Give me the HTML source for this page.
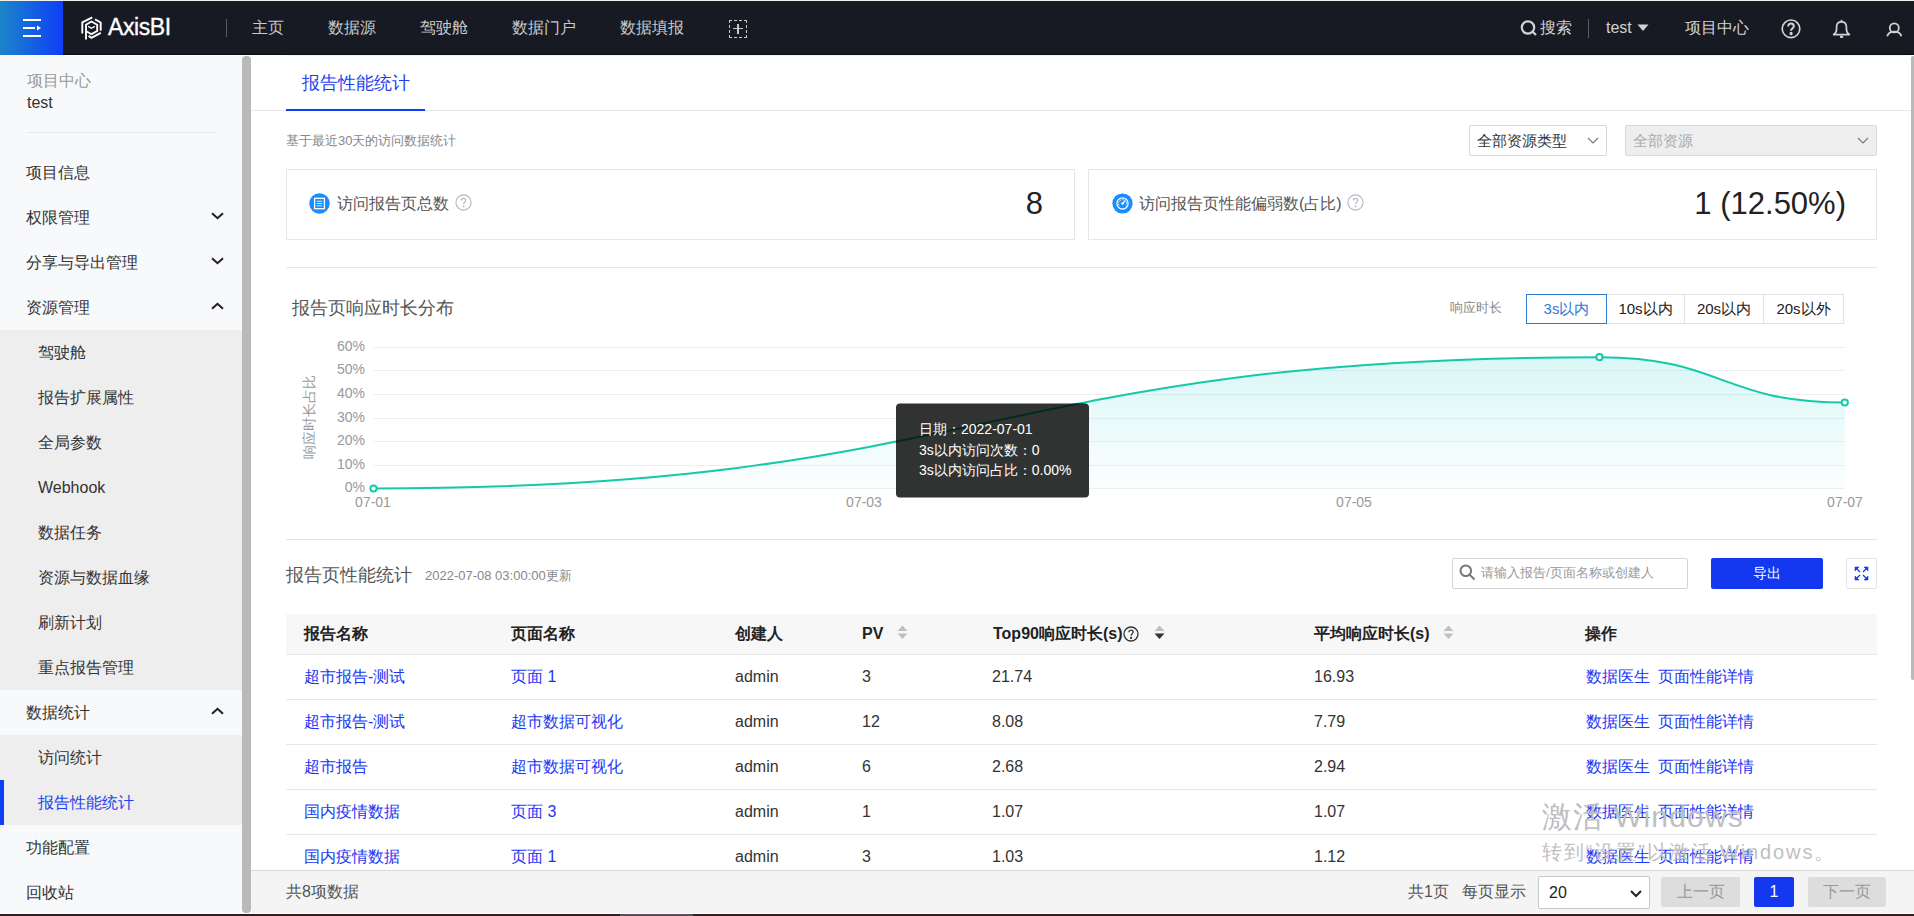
<!DOCTYPE html>
<html><head><meta charset="utf-8"><title>AxisBI</title>
<style>
*{box-sizing:border-box;margin:0;padding:0}
html,body{width:1914px;height:916px;overflow:hidden;background:#fff;font-family:"Liberation Sans",sans-serif;color:#333}
.a{position:absolute;white-space:nowrap}
#topline{left:0;top:0;width:1914px;height:1px;background:#f0f0ec}
#hdr{left:0;top:1px;width:1914px;height:54px;background:#171a22}
#menubtn{left:0;top:0;width:63px;height:54px;background:linear-gradient(90deg,#1b86c8,#0f3ef8)}
.navt{top:0;height:54px;line-height:54px;font-size:16px;color:#c8c9cc}
#side{left:0;top:55px;width:242px;height:858px;background:#f8f9fb;overflow:hidden}
.si{position:absolute;left:0;width:242px;height:45px;line-height:45px;font-size:16px;color:#333;padding-left:26px}
.sub{background:#eeeeee;padding-left:38px}
.chev{position:absolute;right:18px;top:17px}
#sbar{left:242px;top:56px;width:9px;height:857px;background:#b9b9b9;border-radius:4px}
#rbar{left:1911px;top:56px;width:4px;height:624px;background:#b9b9b9;border-radius:3px}
#bot{left:0;top:913px;width:1914px;height:1px;background:#fff}
#bot2{left:0;top:914px;width:1914px;height:2px;background:#321c22}

.gray13{font-size:13px;color:#888}
.card{border:1px solid #e6e6e6;background:#fff}
.sel{border:1px solid #d9d9d9;border-radius:2px;background:#fff;font-size:15px;line-height:29px;padding-left:7px;color:#333}
.btn{position:absolute;top:0;height:30px;line-height:28px;text-align:center;font-size:15px;color:#222;border:1px solid #e3e3e3;background:#fff}
.th{position:absolute;top:0;height:40px;line-height:39px;font-size:16px;font-weight:bold;color:#222}
.td{position:absolute;height:45px;line-height:44px;font-size:16px;color:#333}
.lk{color:#1a36f6}
.rowline{position:absolute;left:0;width:1591px;height:1px;background:#e6e6e6}
</style></head><body>
<div class="a" id="topline"></div>
<div class="a" id="hdr">
  <div class="a" id="menubtn">
    <svg class="a" style="left:22px;top:17px" width="20" height="20" viewBox="0 0 20 20">
      <rect x="1" y="1" width="18" height="2" fill="#fff"/>
      <rect x="1" y="9" width="12" height="2" fill="#fff"/>
      <path d="M15 7.5 L19 10 L15 12.5 Z" fill="#fff"/>
      <rect x="1" y="17" width="18" height="2" fill="#fff"/>
    </svg>
  </div>
  <svg class="a" style="left:78px;top:13px" width="26" height="28" viewBox="0 0 26 28" fill="none" stroke="#fff" stroke-width="1.9" stroke-linejoin="miter">
    <path d="M14.3 3.3 L4.3 8.3 L4.3 19.6"/>
    <path d="M17 5.4 L22.7 8.5 L22.7 16.8"/>
    <path d="M8 25.6 L8 10.7 L13.4 7.5 L19.2 10.7 L19.2 17 L13.4 20.2 L8 17"/>
    <path d="M10.2 12.4 L13.4 14.3 L16.8 12.4" stroke-width="1.3"/>
    <path d="M10.6 21.9 L13.4 23.8 L22.8 18.9"/>
  </svg>
  <div class="a" style="left:108px;top:-1px;height:54px;line-height:54px;font-size:23px;color:#fff;letter-spacing:-0.4px;-webkit-text-stroke:0.35px #fff">AxisBI</div>
  <div class="a" style="left:226px;top:18px;width:1px;height:18px;background:#5a5d66"></div>
  <div class="a navt" style="left:252px">主页</div>
  <div class="a navt" style="left:328px">数据源</div>
  <div class="a navt" style="left:420px">驾驶舱</div>
  <div class="a navt" style="left:512px">数据门户</div>
  <div class="a navt" style="left:620px">数据填报</div>
  <div class="a" style="left:729px;top:19px;width:18px;height:18px;border:1px dashed #c8c9cc"></div>
  <div class="a" style="left:733px;top:27px;width:10px;height:1.3px;background:#c8c9cc"></div>
  <div class="a" style="left:737.4px;top:23px;width:1.3px;height:10px;background:#c8c9cc"></div>
  <svg class="a" style="left:1520px;top:18px" width="18" height="18" viewBox="0 0 18 18" fill="none" stroke="#d2d2d2" stroke-width="2.2"><circle cx="8" cy="8.5" r="6.2"/><path d="M12.5 12.5 L16 16"/></svg>
  <div class="a navt" style="left:1540px;color:#d2d2d2">搜索</div>
  <div class="a" style="left:1588px;top:18px;width:1px;height:19px;background:#5a5d66"></div>
  <div class="a navt" style="left:1606px;color:#d2d2d2;font-size:16px">test</div>
  <svg class="a" style="left:1637px;top:23px" width="12" height="8" viewBox="0 0 12 8"><path d="M0.5 0.5 L11.5 0.5 L6 7 Z" fill="#d2d2d2"/></svg>
  <div class="a navt" style="left:1685px;color:#d2d2d2">项目中心</div>
  <svg class="a" style="left:1780px;top:17px" width="21" height="21" viewBox="0 0 21 21" fill="none" stroke="#d2d2d2" stroke-width="1.7"><circle cx="11" cy="10.8" r="8.8"/><path d="M8.2 8.5 C8.2 6.6 9.5 5.6 11 5.6 C12.6 5.6 13.8 6.6 13.8 8.2 C13.8 10.2 11.1 10.4 11.1 12.7" stroke-width="2"/><circle cx="11.1" cy="15.5" r="0.8" fill="#d2d2d2"/></svg>
  <svg class="a" style="left:1832px;top:16px" width="20" height="22" viewBox="0 0 20 22" fill="none" stroke="#d2d2d2" stroke-width="1.7" stroke-linejoin="round"><g transform="translate(0,-0.8)"><path d="M1.6 18.4 C3.4 17.4 4.6 15.6 4.6 12.8 L4.6 10.5 C4.6 7.6 6.6 5.6 9.5 5.6 C12.4 5.6 14.4 7.6 14.4 10.5 L14.4 12.8 C14.4 15.6 15.6 17.4 17.4 18.4 Z"/><path d="M8 20.6 L11.2 20.6" stroke-width="2.2"/><path d="M9.5 3.6 L9.5 5.6"/></g></svg>
  <svg class="a" style="left:1885px;top:18px" width="18" height="20" viewBox="0 0 18 20" fill="none" stroke="#d2d2d2" stroke-width="1.8"><circle cx="9.3" cy="8.9" r="4.5"/><path d="M2.2 17.2 C3 14.4 5.8 12.6 9.3 12.6 C12.8 12.6 15.6 14.4 16.4 17.2"/></svg>
</div>
<div class="a" id="side">
<div class="a" style="left:27px;top:16px;font-size:16px;color:#999;line-height:20px">项目中心</div>
<div class="a" style="left:27px;top:38px;font-size:16px;color:#333;line-height:20px">test</div>
<div class="a" style="left:27px;top:77px;width:188px;height:1px;background:#e6e8ec"></div>
<div class="si " style="top:95px">项目信息</div>
<div class="si " style="top:140px">权限管理<svg class="chev" width="13" height="8" viewBox="0 0 13 8" fill="none" stroke="#222" stroke-width="2.1"><path d="M1 1.2 L6.5 6.2 L12 1.2"/></svg></div>
<div class="si " style="top:185px">分享与导出管理<svg class="chev" width="13" height="8" viewBox="0 0 13 8" fill="none" stroke="#222" stroke-width="2.1"><path d="M1 1.2 L6.5 6.2 L12 1.2"/></svg></div>
<div class="si " style="top:230px">资源管理<svg class="chev" width="13" height="8" viewBox="0 0 13 8" fill="none" stroke="#222" stroke-width="2.1"><path d="M1 6.8 L6.5 1.8 L12 6.8"/></svg></div>
<div class="si sub" style="top:275px">驾驶舱</div>
<div class="si sub" style="top:320px">报告扩展属性</div>
<div class="si sub" style="top:365px">全局参数</div>
<div class="si sub" style="top:410px">Webhook</div>
<div class="si sub" style="top:455px">数据任务</div>
<div class="si sub" style="top:500px">资源与数据血缘</div>
<div class="si sub" style="top:545px">刷新计划</div>
<div class="si sub" style="top:590px">重点报告管理</div>
<div class="si " style="top:635px">数据统计<svg class="chev" width="13" height="8" viewBox="0 0 13 8" fill="none" stroke="#222" stroke-width="2.1"><path d="M1 6.8 L6.5 1.8 L12 6.8"/></svg></div>
<div class="si sub" style="top:680px">访问统计</div>
<div class="si sub act" style="top:725px;color:#1f3ff0">报告性能统计</div>
<div class="si " style="top:770px">功能配置</div>
<div class="si " style="top:815px">回收站</div>
<div class="a" style="left:0;top:725px;width:4px;height:45px;background:#0f3ef8"></div>
</div>

<div class="a" id="main" style="left:251px;top:55px;width:1660px;height:858px;overflow:hidden">
  <!-- tab -->
  <div class="a" style="left:0;top:55px;width:1660px;height:1px;background:#e8e8e8"></div>
  <div class="a" style="left:51px;top:17px;font-size:18px;line-height:22px;color:#1f3ff0">报告性能统计</div>
  <div class="a" style="left:35px;top:54px;width:139px;height:2px;background:#0f3ef8"></div>
  <div class="a gray13" style="left:35px;top:77px;line-height:18px">基于最近30天的访问数据统计</div>
  <div class="a sel" style="left:1218px;top:70px;width:138px;height:31px">全部资源类型
    <svg class="a" style="left:117px;top:11px" width="12" height="8" viewBox="0 0 12 8" fill="none" stroke="#777" stroke-width="1.1"><path d="M1 1 L6 6 L11 1"/></svg></div>
  <div class="a sel" style="left:1374px;top:70px;width:252px;height:31px;background:#eeeeee;color:#aaa">全部资源
    <svg class="a" style="left:231px;top:11px" width="12" height="8" viewBox="0 0 12 8" fill="none" stroke="#777" stroke-width="1.1"><path d="M1 1 L6 6 L11 1"/></svg></div>
  <!-- cards -->
  <div class="a card" style="left:35px;top:114px;width:789px;height:71px">
    <svg class="a" style="left:22px;top:23px" width="21" height="21" viewBox="0 0 21 21"><circle cx="10.5" cy="10.5" r="10.2" fill="#1a8cff"/><rect x="5.6" y="5.3" width="9.8" height="10.4" fill="none" stroke="#fff" stroke-width="1.3"/><path d="M7.8 8.3 H13.2 M7.8 10.5 H13.2 M7.8 12.7 H13.2" stroke="#fff" stroke-width="1.1" opacity="0.85"/></svg>
    <div class="a" style="left:50px;top:23px;font-size:16px;line-height:22px;color:#555">访问报告页总数</div>
    <svg class="a" style="left:168px;top:24px" width="17" height="17" viewBox="0 0 17 17" fill="none" stroke="#b5b5c3" stroke-width="1.1"><circle cx="8.5" cy="8.5" r="7.6"/><path d="M6.3 6.6 C6.3 5.2 7.3 4.4 8.5 4.4 C9.7 4.4 10.7 5.2 10.7 6.4 C10.7 8 8.6 8.2 8.6 10.2"/><circle cx="8.6" cy="12.4" r="0.4" fill="#b5b5c3"/></svg>
    <div class="a" style="right:31px;top:15px;font-size:31px;line-height:38px;color:#222">8</div>
  </div>
  <div class="a card" style="left:837px;top:114px;width:789px;height:71px">
    <svg class="a" style="left:23px;top:23px" width="21" height="21" viewBox="0 0 21 21"><circle cx="10.5" cy="10.5" r="10.1" fill="#1a8cff"/><circle cx="10.5" cy="10.5" r="5.6" fill="none" stroke="#fff" stroke-width="1.2"/><path d="M7 12.6 A4 4 0 1 1 14 12.6" fill="none" stroke="#fff" stroke-width="1" stroke-dasharray="1.6 1"/><path d="M10.5 10.5 L13.2 7.6" stroke="#fff" stroke-width="1.2"/><circle cx="10.5" cy="10.5" r="1.2" fill="#fff"/></svg>
    <div class="a" style="left:50px;top:23px;font-size:16px;line-height:22px;color:#555">访问报告页性能偏弱数(占比)</div>
    <svg class="a" style="left:258px;top:24px" width="17" height="17" viewBox="0 0 17 17" fill="none" stroke="#b5b5c3" stroke-width="1.1"><circle cx="8.5" cy="8.5" r="7.6"/><path d="M6.3 6.6 C6.3 5.2 7.3 4.4 8.5 4.4 C9.7 4.4 10.7 5.2 10.7 6.4 C10.7 8 8.6 8.2 8.6 10.2"/><circle cx="8.6" cy="12.4" r="0.4" fill="#b5b5c3"/></svg>
    <div class="a" style="right:30px;top:15px;font-size:31px;line-height:38px;color:#222">1 (12.50%)</div>
  </div>
  <div class="a" style="left:35px;top:212px;width:1591px;height:1px;background:#e6e6e6"></div>
  <!-- chart -->
  <div class="a" style="left:41px;top:242px;font-size:18px;line-height:22px;color:#555">报告页响应时长分布</div>
  <div class="a gray13" style="left:1199px;top:244px;line-height:18px">响应时长</div>
  <div class="a" style="left:1275px;top:239px;width:318px;height:30px">
    <div class="btn" style="left:0;width:81px;border-color:#2a7ad8;color:#2a7ad8;z-index:2">3s以内</div>
    <div class="btn" style="left:80px;width:79px">10s以内</div>
    <div class="btn" style="left:158px;width:80px">20s以内</div>
    <div class="btn" style="left:237px;width:81px">20s以外</div>
  </div>

  <!-- table section -->
  <div class="a" style="left:35px;top:484px;width:1591px;height:1px;background:#e2e2e2"></div>
  <div class="a" style="left:35px;top:509px;font-size:18px;line-height:22px;color:#555">报告页性能统计</div>
  <div class="a gray13" style="left:174px;top:512px;line-height:18px">2022-07-08 03:00:00更新</div>
  <div class="a" style="left:1201px;top:503px;width:236px;height:31px;border:1px solid #d4d4d4;border-radius:2px;background:#fff">
    <svg class="a" style="left:6px;top:5px" width="17" height="17" viewBox="0 0 17 17" fill="none" stroke="#777" stroke-width="2"><circle cx="6.8" cy="6.8" r="5.3"/><path d="M10.6 10.6 L15.5 15.5"/></svg>
    <div class="a" style="left:28px;top:5px;font-size:13px;line-height:18px;color:#999">请输入报告/页面名称或创建人</div>
  </div>
  <div class="a" style="left:1460px;top:503px;width:112px;height:31px;background:#1438f0;border-radius:2px;color:#fff;font-size:14px;line-height:31px;text-align:center">导出</div>
  <div class="a" style="left:1595px;top:503px;width:31px;height:31px;border:1px solid #e3e3e8;border-radius:2px;background:#fff">
    <svg class="a" style="left:7px;top:7px" width="15" height="15" viewBox="0 0 15 15" fill="#1a36f6" stroke="#1a36f6" stroke-width="1.2">
      <path d="M1 1 L5 1 L1 5 Z" stroke-width="0.6"/><path d="M2 2 L6 6"/>
      <path d="M14 1 L10 1 L14 5 Z" stroke-width="0.6"/><path d="M13 2 L9 6"/>
      <path d="M1 14 L5 14 L1 10 Z" stroke-width="0.6"/><path d="M2 13 L6 9"/>
      <path d="M14 14 L10 14 L14 10 Z" stroke-width="0.6"/><path d="M13 13 L9 9"/>
    </svg>
  </div>
  <div class="a" style="left:35px;top:559px;width:1591px;height:41px;background:#f7f7f7;border-bottom:1px solid #e6e6e6">
    <div class="th" style="left:18px">报告名称</div>
    <div class="th" style="left:225px">页面名称</div>
    <div class="th" style="left:449px">创建人</div>
    <div class="th" style="left:576px">PV</div>
    <svg class="a" style="left:611px;top:11px" width="11" height="15" viewBox="0 0 11 15"><path d="M0.5 6 L5.5 0.5 L10.5 6 Z" fill="#c0c0c0"/><path d="M0.5 8.5 L5.5 14 L10.5 8.5 Z" fill="#c0c0c0"/></svg>
    <div class="th" style="left:707px">Top90响应时长(s)</div>
    <svg class="a" style="left:837px;top:12px" width="16" height="16" viewBox="0 0 16 16" fill="none" stroke="#333" stroke-width="1.3"><circle cx="8" cy="8" r="7"/><path d="M5.9 6.2 C5.9 4.9 6.8 4.1 8 4.1 C9.2 4.1 10.1 4.9 10.1 6 C10.1 7.6 8.1 7.8 8.1 9.8"/><circle cx="8.1" cy="11.9" r="0.5" fill="#333"/></svg>
    <svg class="a" style="left:868px;top:11px" width="11" height="15" viewBox="0 0 11 15"><path d="M0.5 6 L5.5 0.5 L10.5 6 Z" fill="#c0c0c0"/><path d="M0.5 8.5 L5.5 14 L10.5 8.5 Z" fill="#333"/></svg>
    <div class="th" style="left:1028px">平均响应时长(s)</div>
    <svg class="a" style="left:1157px;top:11px" width="11" height="15" viewBox="0 0 11 15"><path d="M0.5 6 L5.5 0.5 L10.5 6 Z" fill="#c0c0c0"/><path d="M0.5 8.5 L5.5 14 L10.5 8.5 Z" fill="#c0c0c0"/></svg>
    <div class="th" style="left:1299px">操作</div>
  </div>
  <div class="a" style="left:35px;top:600px;width:1591px;height:45px;border-bottom:1px solid #e6e6e6">
    <div class="td lk" style="left:18px">超市报告-测试</div><div class="td lk" style="left:225px">页面 1</div><div class="td" style="left:449px">admin</div><div class="td" style="left:576px">3</div><div class="td" style="left:706px">21.74</div><div class="td" style="left:1028px">16.93</div><div class="td lk" style="left:1300px">数据医生</div><div class="td lk" style="left:1372px">页面性能详情</div>
  </div>
  <div class="a" style="left:35px;top:645px;width:1591px;height:45px;border-bottom:1px solid #e6e6e6">
    <div class="td lk" style="left:18px">超市报告-测试</div><div class="td lk" style="left:225px">超市数据可视化</div><div class="td" style="left:449px">admin</div><div class="td" style="left:576px">12</div><div class="td" style="left:706px">8.08</div><div class="td" style="left:1028px">7.79</div><div class="td lk" style="left:1300px">数据医生</div><div class="td lk" style="left:1372px">页面性能详情</div>
  </div>
  <div class="a" style="left:35px;top:690px;width:1591px;height:45px;border-bottom:1px solid #e6e6e6">
    <div class="td lk" style="left:18px">超市报告</div><div class="td lk" style="left:225px">超市数据可视化</div><div class="td" style="left:449px">admin</div><div class="td" style="left:576px">6</div><div class="td" style="left:706px">2.68</div><div class="td" style="left:1028px">2.94</div><div class="td lk" style="left:1300px">数据医生</div><div class="td lk" style="left:1372px">页面性能详情</div>
  </div>
  <div class="a" style="left:35px;top:735px;width:1591px;height:45px;border-bottom:1px solid #e6e6e6">
    <div class="td lk" style="left:18px">国内疫情数据</div><div class="td lk" style="left:225px">页面 3</div><div class="td" style="left:449px">admin</div><div class="td" style="left:576px">1</div><div class="td" style="left:706px">1.07</div><div class="td" style="left:1028px">1.07</div><div class="td lk" style="left:1300px">数据医生</div><div class="td lk" style="left:1372px">页面性能详情</div>
  </div>
  <div class="a" style="left:35px;top:780px;width:1591px;height:45px;border-bottom:1px solid #e6e6e6">
    <div class="td lk" style="left:18px">国内疫情数据</div><div class="td lk" style="left:225px">页面 1</div><div class="td" style="left:449px">admin</div><div class="td" style="left:576px">3</div><div class="td" style="left:706px">1.03</div><div class="td" style="left:1028px">1.12</div><div class="td lk" style="left:1300px">数据医生</div><div class="td lk" style="left:1372px">页面性能详情</div>
  </div>
</div>
<svg class="a" style="left:280px;top:330px" width="1600" height="190" viewBox="280 330 1600 190" font-family="Liberation Sans, sans-serif" font-size="14" fill="#999">
  <defs>
    <linearGradient id="ag" x1="0" y1="0" x2="0" y2="1"><stop offset="0" stop-color="#52dad6" stop-opacity="0.22"/><stop offset="1" stop-color="#52dad6" stop-opacity="0.02"/></linearGradient>
    <clipPath id="tc"><rect x="896" y="403.5" width="193" height="94" rx="4"/></clipPath>
  </defs>
  <path d="M373 347.5 H1845" stroke="#eeeff3" stroke-width="1"/><text x="365" y="351.0" text-anchor="end">60%</text><path d="M373 370.5 H1845" stroke="#eeeff3" stroke-width="1"/><text x="365" y="374.0" text-anchor="end">50%</text><path d="M373 394.5 H1845" stroke="#eeeff3" stroke-width="1"/><text x="365" y="398.0" text-anchor="end">40%</text><path d="M373 418.5 H1845" stroke="#eeeff3" stroke-width="1"/><text x="365" y="422.0" text-anchor="end">30%</text><path d="M373 441.5 H1845" stroke="#eeeff3" stroke-width="1"/><text x="365" y="445.0" text-anchor="end">20%</text><path d="M373 465.5 H1845" stroke="#eeeff3" stroke-width="1"/><text x="365" y="469.0" text-anchor="end">10%</text><path d="M373 488.5 H1845" stroke="#eeeff3" stroke-width="1"/><text x="365" y="492.0" text-anchor="end">0%</text>
  <text transform="translate(314,417) rotate(-90)" text-anchor="middle" font-size="13.5">响应时长占比</text>
  <text x="373" y="507" text-anchor="middle">07-01</text><text x="864" y="507" text-anchor="middle">07-03</text><text x="1354" y="507" text-anchor="middle">07-05</text><text x="1845" y="507" text-anchor="middle">07-07</text>
  <path d="M373,488.5 C986.25,488.5 986.25,357.2 1599.5,357.2 C1722,357.2 1722,402.5 1844.8,402.5 L1844.8,488.5 L373,488.5 Z" fill="url(#ag)"/>
  <path d="M373,488.5 C986.25,488.5 986.25,357.2 1599.5,357.2 C1722,357.2 1722,402.5 1844.8,402.5" fill="none" stroke="#15c9a8" stroke-width="2"/>
  <circle cx="373.5" cy="488.5" r="3.1" fill="#fff" stroke="#15c9a8" stroke-width="2"/>
  <circle cx="1599.5" cy="357.2" r="3.1" fill="#fff" stroke="#15c9a8" stroke-width="2"/>
  <circle cx="1844.8" cy="402.5" r="3.1" fill="#fff" stroke="#15c9a8" stroke-width="2"/>
  <rect x="896" y="403.5" width="193" height="94" rx="4" fill="#313333"/>
  <path d="M373,488.5 C986.25,488.5 986.25,357.2 1599.5,357.2 C1722,357.2 1722,402.5 1844.8,402.5" fill="none" stroke="#022a22" stroke-width="2" clip-path="url(#tc)"/>
  <g fill="#fff" font-size="14">
    <text x="919" y="434">日期：2022-07-01</text>
    <text x="919" y="454.5">3s以内访问次数：0</text>
    <text x="919" y="475">3s以内访问占比：0.00%</text>
  </g>
</svg>

<div class="a" style="left:1542px;top:797px;font-size:30px;line-height:40px;color:#bfbfbf;letter-spacing:1.2px">激活 Windows</div>
<div class="a" style="left:1542px;top:839px;font-size:20px;line-height:26px;color:#bfbfbf;letter-spacing:1.9px">转到“设置”以激活 Windows。</div>
<div class="a" style="left:251px;top:870px;width:1663px;height:43px;background:#f4f4f4;border-top:1px solid #d9d9d9">
  <div class="a" style="left:35px;top:10px;font-size:16px;line-height:22px;color:#555">共8项数据</div>
  <div class="a" style="left:1157px;top:10px;font-size:16px;line-height:22px;color:#555">共1页</div>
  <div class="a" style="left:1211px;top:10px;font-size:16px;line-height:22px;color:#555">每页显示</div>
  <div class="a" style="left:1287px;top:5px;width:112px;height:33px;background:#fff;border:1px solid #c9c9c9;border-radius:2px">
    <div class="a" style="left:10px;top:5px;font-size:16px;line-height:22px;color:#222">20</div>
    <svg class="a" style="left:91px;top:13px" width="12" height="8" viewBox="0 0 12 8" fill="none" stroke="#222" stroke-width="2"><path d="M1 1 L6 6 L11 1"/></svg>
  </div>
  <div class="a" style="left:1410px;top:6px;width:79px;height:30px;background:#dddddd;border-radius:2px;text-align:center;font-size:16px;line-height:30px;color:#999">上一页</div>
  <div class="a" style="left:1503px;top:6px;width:40px;height:30px;background:#1438f0;border-radius:2px;text-align:center;font-size:16px;line-height:30px;color:#fff">1</div>
  <div class="a" style="left:1557px;top:6px;width:78px;height:30px;background:#dddddd;border-radius:2px;text-align:center;font-size:16px;line-height:30px;color:#999">下一页</div>
</div>
<div class="a" id="sbar"></div>
<div class="a" style="left:0;top:55px;width:251px;height:1px;background:#fff"></div>
<div class="a" style="left:286px;top:55px;width:1625px;height:1px;background:#f6f6f6"></div>
<div class="a" style="left:63px;top:54px;width:1851px;height:1px;background:#0c0e17"></div>
<div class="a" id="rbar"></div>
<div class="a" id="bot"></div>
<div class="a" id="bot2"></div>
<div class="a" style="left:620px;top:914px;width:73px;height:2px;background:#5a5055"></div>
</body></html>
